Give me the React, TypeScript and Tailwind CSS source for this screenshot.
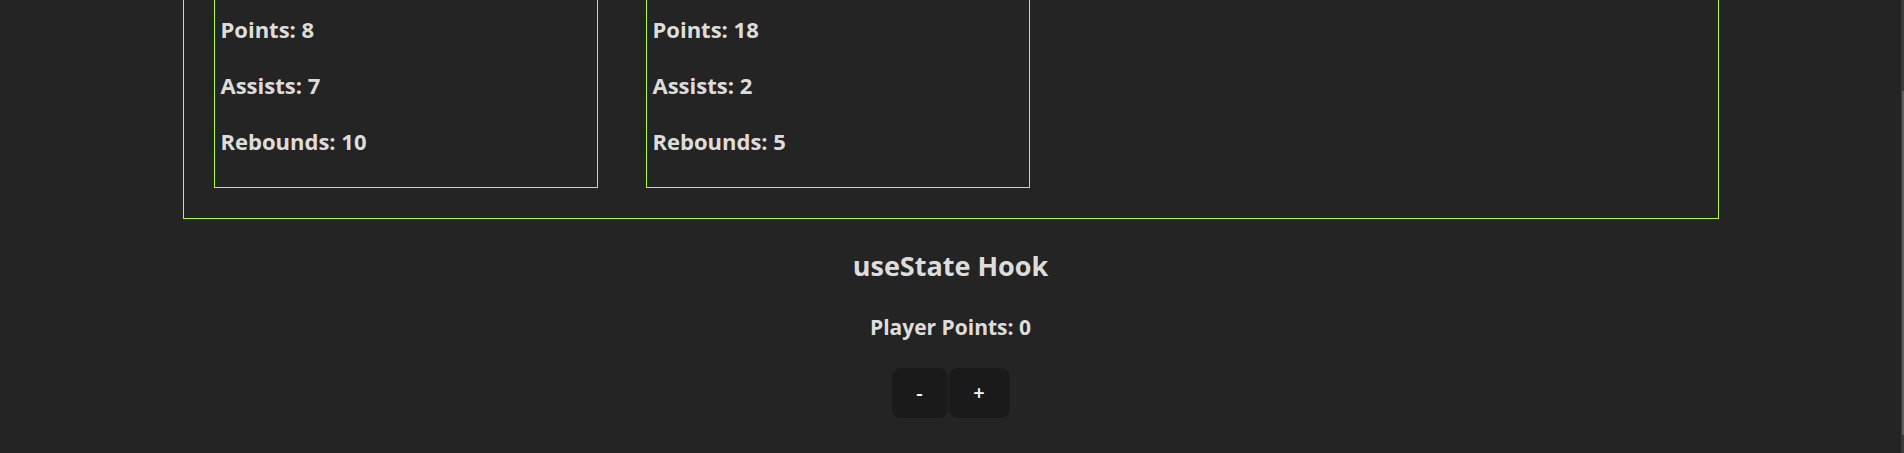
const players = [
  { points: 8, assists: 7, rebounds: 10 },
  { points: 18, assists: 2, rebounds: 5 },
];

function PlayerCard({ points, assists, rebounds }: { points: number; assists: number; rebounds: number }) {
  return (
    <div className="w-[384px] border border-[#adff2f] pl-[6px] pt-[21px] pb-[30px]">
      <div className="flex flex-col gap-[24px] text-[22px] leading-8 font-bold">
        <h3>Points: {points}</h3>
        <h3>Assists: {assists}</h3>
        <h3>Rebounds: {rebounds}</h3>
      </div>
    </div>
  );
}

export default function App() {
  return (
    <div
      className="flex h-[453px] w-full overflow-hidden bg-[#242424] text-[rgba(255,255,255,0.87)]"
      style={{ fontFamily: '"Open Sans", "Noto Sans", sans-serif' }}
    >
      <div className="flex-1 flex flex-col items-center">
        {/* Players list */}
        <div className="-mt-[40px] w-[1536px] border border-[#adff2f] p-[30px]">
          <div className="flex gap-[48px]">
            {players.map((p, i) => (
              <PlayerCard key={i} {...p} />
            ))}
          </div>
        </div>

        {/* useState demo */}
        <h2 className="mt-[29px] text-[27px] leading-9 font-bold">useState Hook</h2>
        <h3 className="mt-[29px] text-[21px] leading-7 font-bold">Player Points: 0</h3>
        <div className="mt-[27px] flex gap-[1px]">
          <button className="h-[50px] w-[56px] rounded-[9px] bg-[#1a1a1a] text-[20px] font-semibold text-white">
            -
          </button>
          <button className="h-[50px] w-[61px] rounded-[9px] bg-[#1a1a1a] text-[20px] font-semibold text-white">
            +
          </button>
        </div>
      </div>

      {/* scrollbar */}
      <div className="w-[3px] bg-[#3a3a3a] flex flex-col">
        <div className="h-[91px]" />
        <div className="h-[344px] w-[2px] ml-auto bg-[#5e5e5e]" />
      </div>
    </div>
  );
}
